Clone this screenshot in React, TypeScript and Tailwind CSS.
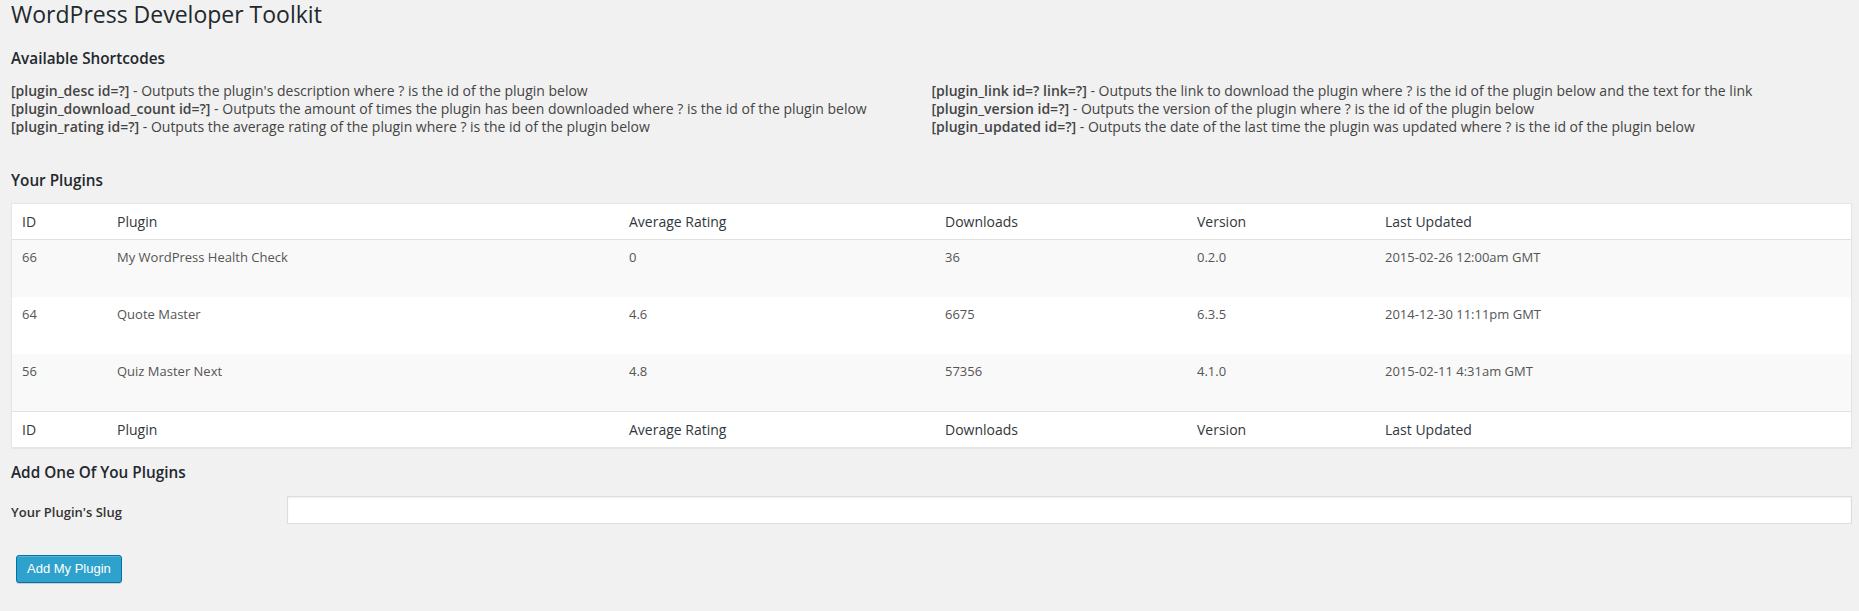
import React from "react";

const leftCodes: [string, string][] = [
  ["[plugin_desc id=?]", " - Outputs the plugin's description where ? is the id of the plugin below"],
  ["[plugin_download_count id=?]", " - Outputs the amount of times the plugin has been downloaded where ? is the id of the plugin below"],
  ["[plugin_rating id=?]", " - Outputs the average rating of the plugin where ? is the id of the plugin below"],
];
const rightCodes: [string, string][] = [
  ["[plugin_link id=? link=?]", " - Outputs the link to download the plugin where ? is the id of the plugin below and the text for the link"],
  ["[plugin_version id=?]", " - Outputs the version of the plugin where ? is the id of the plugin below"],
  ["[plugin_updated id=?]", " - Outputs the date of the last time the plugin was updated where ? is the id of the plugin below"],
];

const headers = ["ID", "Plugin", "Average Rating", "Downloads", "Version", "Last Updated"];
const rows = [
  ["66", "My WordPress Health Check", "0", "36", "0.2.0", "2015-02-26 12:00am GMT"],
  ["64", "Quote Master", "4.6", "6675", "6.3.5", "2014-12-30 11:11pm GMT"],
  ["56", "Quiz Master Next", "4.8", "57356", "4.1.0", "2015-02-11 4:31am GMT"],
];

const gridCols = "grid grid-cols-[95px_512px_316px_252px_188px_1fr]";

function CodeList({ items }: { items: [string, string][] }) {
  return (
    <div className="text-[14px] leading-[18px] text-[#444]">
      {items.map(([code, desc]) => (
        <div key={code} className="whitespace-nowrap">
          <span className="font-semibold">{code}</span>
          {desc}
        </div>
      ))}
    </div>
  );
}

function HeaderRow({ top }: { top?: boolean }) {
  return (
    <div
      className={`${gridCols} h-[36px] bg-white ${
        top ? "border-b border-[#e1e1e1]" : "border-t border-[#e1e1e1]"
      }`}
    >
      {headers.map((h) => (
        <div key={h} className="px-[10px] pt-[8px] text-[14px] leading-[19px] text-[#32373c]">
          {h}
        </div>
      ))}
    </div>
  );
}

export default function App() {
  return (
    <div
      className="min-h-screen bg-[#f1f1f1] pl-[11px] pr-[7px]"
      style={{ fontFamily: '"Open Sans", "Noto Sans", sans-serif' }}
    >
      <h1 className="text-[23px] leading-[29px] font-normal text-[#23282d]">WordPress Developer Toolkit</h1>

      <h3 className="mt-[19px] text-[15.3px] leading-[20px] font-semibold text-[#23282d]">Available Shortcodes</h3>

      <div className="mt-[14px] grid grid-cols-2">
        <CodeList items={leftCodes} />
        <CodeList items={rightCodes} />
      </div>

      <h3 className="mt-[34px] text-[15.3px] leading-[20px] font-semibold text-[#23282d]">Your Plugins</h3>

      <div className="mt-[13px] border border-[#e5e5e5] bg-white shadow-[0_1px_1px_rgba(0,0,0,0.04)]">
        <HeaderRow top />
        {rows.map((r, i) => (
          <div key={r[0]} className={`${gridCols} h-[57px] ${i % 2 === 0 ? "bg-[#f9f9f9]" : "bg-white"}`}>
            {r.map((c, j) => (
              <div key={j} className="px-[10px] pt-[8px] text-[13px] leading-[18.2px] text-[#555]">
                {c}
              </div>
            ))}
          </div>
        ))}
        <HeaderRow />
      </div>

      <h3 className="mt-[14px] text-[15.3px] leading-[20px] font-semibold text-[#23282d]">Add One Of You Plugins</h3>

      <div className="mt-[14px] flex items-start">
        <label className="w-[276px] shrink-0 pt-[6px] text-[13px] leading-[20px] font-semibold text-[#333]">
          Your Plugin's Slug
        </label>
        <input
          type="text"
          className="h-[28px] flex-1 border border-[#ddd] bg-white px-[5px] text-[14px] shadow-[inset_0_1px_2px_rgba(0,0,0,0.07)] outline-none"
        />
      </div>

      <button
        type="button"
        className="mt-[31px] ml-[5px] h-[28px] rounded-[3px] border border-[#0074a2] bg-[#2ea2cc] px-[10px] pb-[1px] text-[13px] leading-[26px] text-white shadow-[inset_0_1px_0_rgba(120,200,230,0.5),0_1px_0_rgba(0,0,0,0.15)]"
        style={{ fontFamily: '"Liberation Sans", Arial, sans-serif' }}
      >
        Add My Plugin
      </button>
    </div>
  );
}
